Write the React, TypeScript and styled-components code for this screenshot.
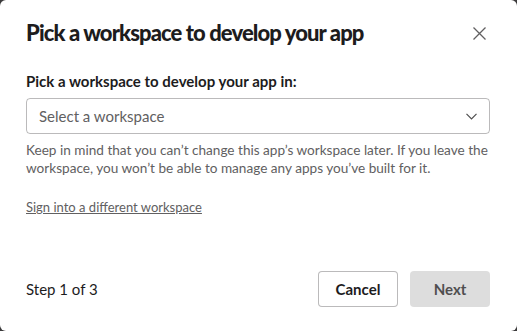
import styled, { createGlobalStyle } from "styled-components";

const GlobalStyle = createGlobalStyle`
  html, body {
    margin: 0;
    padding: 0;
    background: #3b3a3b;
  }
  * {
    box-sizing: border-box;
  }
`;

const Modal = styled.div`
  width: 517px;
  height: 331px;
  display: flex;
  flex-direction: column;
  background: #ffffff;
  border-radius: 6px;
  font-family: Lato, "Open Sans", sans-serif;
  color: #1d1c1d;
  padding: 0 27px 24px 26px;
`;

const Header = styled.div`
  display: flex;
  align-items: center;
  justify-content: space-between;
  padding-top: 18px;
`;

const Title = styled.h1`
  margin: 0;
  font-size: 22px;
  line-height: 30px;
  font-weight: 900;
  letter-spacing: -0.9px;
`;

const CloseButton = styled.button`
  width: 28px;
  height: 28px;
  margin-right: -3px;
  border: none;
  background: none;
  padding: 0;
  display: flex;
  align-items: center;
  justify-content: center;
  color: #616061;
  cursor: pointer;
`;

const Body = styled.div`
  flex: 1;
  display: flex;
  flex-direction: column;
  padding-top: 22px;
`;

const Label = styled.label`
  font-size: 15px;
  line-height: 22px;
  font-weight: 700;
`;

const Select = styled.div`
  margin-top: 6px;
  height: 36px;
  border: 1px solid rgba(29, 28, 29, 0.3);
  border-radius: 4px;
  display: flex;
  align-items: center;
  justify-content: space-between;
  padding: 0 12px;
  font-size: 15px;
  color: #616061;
`;

const Hint = styled.p`
  margin: 7px 0 0;
  font-size: 13.6px;
  line-height: 18px;
  color: #616061;
`;

const Link = styled.a`
  margin-top: 21px;
  font-size: 13px;
  line-height: 18px;
  color: #616061;
  text-decoration: underline;
  align-self: flex-start;
`;

const Footer = styled.div`
  display: flex;
  align-items: center;
  justify-content: space-between;
`;

const Step = styled.span`
  font-size: 15px;
  color: #1d1c1d;
`;

const Actions = styled.div`
  display: flex;
  gap: 12px;
`;

const Button = styled.button<{ $disabled?: boolean }>`
  width: 80px;
  height: 36px;
  border-radius: 4px;
  font-family: Lato, "Open Sans", sans-serif;
  font-size: 15px;
  font-weight: 700;
  border: ${(p) => (p.$disabled ? "none" : "1px solid rgba(29, 28, 29, 0.3)")};
  background: ${(p) => (p.$disabled ? "#dddddd" : "#ffffff")};
  color: ${(p) => (p.$disabled ? "#4f4e4f" : "#1d1c1d")};
  cursor: pointer;
`;

const App = () => {
  return (
    <>
      <GlobalStyle />
      <Modal>
        <Header>
          <Title>Pick a workspace to develop your app</Title>
          <CloseButton aria-label="Close">
            <svg width="13" height="13" viewBox="0 0 13 13">
              <path d="M0.5 0.5 L12.5 12.5 M12.5 0.5 L0.5 12.5" stroke="currentColor" strokeWidth="1.3" />
            </svg>
          </CloseButton>
        </Header>
        <Body>
          <Label>Pick a workspace to develop your app in:</Label>
          <Select>
            <span>Select a workspace</span>
            <svg width="11" height="7" viewBox="0 0 11 7">
              <path d="M0.5 0.8 L5.5 5.8 L10.5 0.8" fill="none" stroke="#4f4e4f" strokeWidth="1.2" />
            </svg>
          </Select>
          <Hint>
            Keep in mind that you can’t change this app’s workspace later. If you leave the
            workspace, you won’t be able to manage any apps you’ve built for it.
          </Hint>
          <Link href="#">Sign into a different workspace</Link>
        </Body>
        <Footer>
          <Step>Step 1 of 3</Step>
          <Actions>
            <Button>Cancel</Button>
            <Button $disabled>Next</Button>
          </Actions>
        </Footer>
      </Modal>
    </>
  );
};

export default App;
